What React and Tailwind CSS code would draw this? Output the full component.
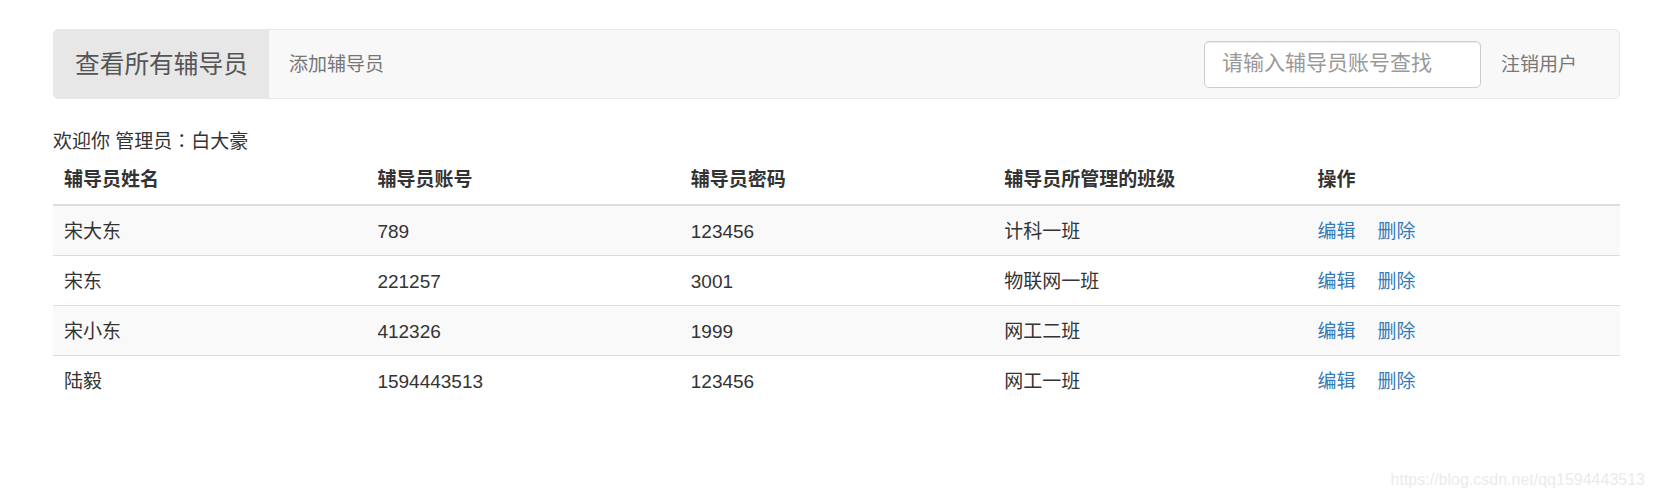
import React from "react";

const rows = [
  { name: "宋大东", account: "789", password: "123456", className: "计科一班" },
  { name: "宋东", account: "221257", password: "3001", className: "物联网一班" },
  { name: "宋小东", account: "412326", password: "1999", className: "网工二班" },
  { name: "陆毅", account: "1594443513", password: "123456", className: "网工一班" },
];

const font = {
  fontFamily: '"Liberation Sans", "Noto Sans CJK SC", sans-serif',
};

export default function App() {
  return (
    <div className="relative h-[500px] w-full bg-white text-[#333]" style={font}>
      <div className="ml-[53px] w-[1567px] pt-[29px]">
        {/* navbar */}
        <div className="flex h-[70px] items-stretch overflow-hidden rounded-[5px] border border-[#e7e7e7] bg-[#f8f8f8]">
          <div className="flex w-[215px] items-center bg-[#e7e7e7] px-[21px] text-[24.7px] leading-[27px] text-[#555]">
            查看所有辅导员
          </div>
          <div className="flex items-center px-[20px] pt-[2px] text-[19px] text-[#777]">添加辅导员</div>
          <div className="flex-1" />
          <div className="flex items-center">
            <input
              placeholder="请输入辅导员账号查找"
              className="h-[47px] w-[277px] rounded-[5px] border border-[#ccc] bg-white px-[17px] pb-[2px] text-[21px] text-[#555] shadow-[inset_0_1px_1px_rgba(0,0,0,0.075)] outline-none placeholder:text-[#999]"
              style={font}
            />
          </div>
          <div className="mr-[22px] flex items-center px-[20px] pt-[2px] text-[19px] text-[#777]">注销用户</div>
        </div>

        <div className="mt-[29px] h-[27px] text-[19px] leading-[27px]">
          欢迎你 管理员<span className="font-['Noto_Sans_CJK_TC'] leading-none">：</span>白大豪
        </div>

        <table className="w-full table-fixed border-collapse text-left text-[19px]">
          <thead>
            <tr>
              <th className="w-1/5 border-b-2 border-[#ddd] px-[11px] py-[11px] font-bold leading-[27px]">辅导员姓名</th>
              <th className="w-1/5 border-b-2 border-[#ddd] px-[11px] py-[11px] font-bold leading-[27px]">辅导员账号</th>
              <th className="w-1/5 border-b-2 border-[#ddd] px-[11px] py-[11px] font-bold leading-[27px]">辅导员密码</th>
              <th className="w-1/5 border-b-2 border-[#ddd] px-[11px] py-[11px] font-bold leading-[27px]">辅导员所管理的班级</th>
              <th className="w-1/5 border-b-2 border-[#ddd] px-[11px] py-[11px] font-bold leading-[27px]">操作</th>
            </tr>
          </thead>
          <tbody>
            {rows.map((r, i) => (
              <tr key={r.name} className={i % 2 === 0 ? "bg-[#f9f9f9]" : "bg-white"}>
                <td className="border-t border-[#ddd] px-[11px] pb-[9.5px] pt-[13px] leading-[26.5px]">{r.name}</td>
                <td className="border-t border-[#ddd] px-[11px] pb-[9.5px] pt-[13px] leading-[26.5px]">{r.account}</td>
                <td className="border-t border-[#ddd] px-[11px] pb-[9.5px] pt-[13px] leading-[26.5px]">{r.password}</td>
                <td className="border-t border-[#ddd] px-[11px] pb-[9.5px] pt-[13px] leading-[26.5px]">{r.className}</td>
                <td className="border-t border-[#ddd] px-[11px] pb-[9.5px] pt-[13px] leading-[26.5px] text-[#337ab7]">
                  <span className="mr-[22px]">编辑</span>
                  <span>删除</span>
                </td>
              </tr>
            ))}
          </tbody>
        </table>
      </div>

      <div className="absolute right-[9px] top-[470px] text-[16px] leading-[20px] text-[#ebebeb]">
        https://blog.csdn.net/qq1594443513
      </div>
    </div>
  );
}
